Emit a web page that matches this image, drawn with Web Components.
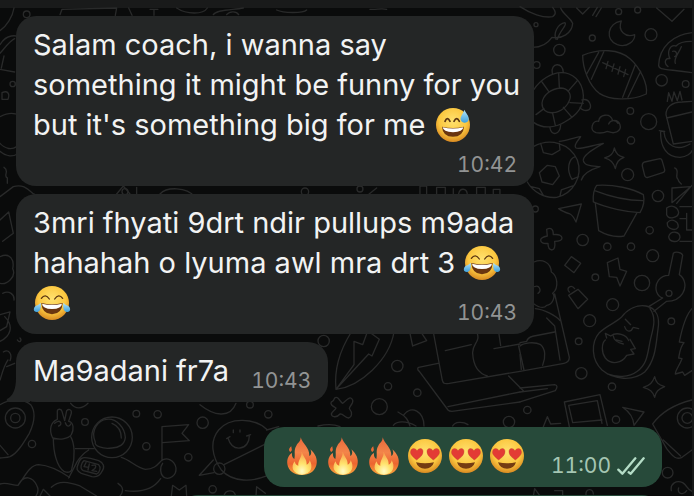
<!DOCTYPE html>
<html lang="en">
<head>
<meta charset="utf-8">
<meta name="viewport" content="width=device-width, initial-scale=1">
<title>Chat</title>
<style>
	body {
		margin: 0;
		background: #0a0b0b;
		font-family: Inter, "Liberation Sans", sans-serif;
		overflow: hidden;
	}
</style>
</head>
<body>

<chat-screen>
	<chat-bubble time="10:42" layout="below">Salam coach, i wanna say something it might be funny for you but it's something big for me <chat-emoji name="sweat"></chat-emoji></chat-bubble>
	<chat-bubble time="10:43" layout="over">3mri fhyati 9drt ndir pullups m9ada hahahah o lyuma awl mra drt 3 <chat-emoji name="joy"></chat-emoji> <chat-emoji name="joy"></chat-emoji></chat-bubble>
	<chat-bubble time="10:43" tail>Ma9adani fr7a</chat-bubble>
	<chat-bubble time="11:00" out><chat-emoji name="fire"></chat-emoji><chat-emoji name="fire"></chat-emoji><chat-emoji name="fire"></chat-emoji><chat-emoji name="love"></chat-emoji><chat-emoji name="love"></chat-emoji><chat-emoji name="love"></chat-emoji></chat-bubble>
	<chat-bubble out wide></chat-bubble>
</chat-screen>

<template id="screen-template">
<style>
	:host {
		display: flex;
		flex-direction: column;
		position: relative;
		height: 100vh;
		overflow: hidden;
		box-sizing: border-box;
		border-right: 2px solid #171818;
	}
	header {
		flex: none;
		height: 8px;
		background: #191a1a;
	}
	main {
		flex: 1;
		display: flex;
		flex-direction: column;
		gap: 8px;
		padding: 8px 30px 0 16px;
		position: relative;
	}
</style>
<chat-wallpaper></chat-wallpaper>
<header></header>
<main><slot></slot></main>
</template>

<template id="bubble-template">
<style>
	:host {
		display: flex;
		flex: none;
		align-self: flex-start;
		align-items: flex-end;
		column-gap: 22px;
		position: relative;
		box-sizing: border-box;
		max-width: 518px;
		padding: 9px 17px;
		border-radius: 20px;
		background: #242626;
		color: #f2f3f3;
	}
	:host([layout]) {
		display: grid;
		row-gap: 6px;
	}
	:host([layout]) .text {
		margin-right: -10px;
	}
	:host([layout="over"]) .text,
	:host([layout="over"]) .meta {
		grid-area: 1 / 1;
	}
	:host([out]) {
		align-self: flex-end;
		margin-top: 17px;
		background: #274a3a;
	}
	:host([out]) .text {
		padding-left: 2px;
	}
	:host([wide]) {
		width: 75%;
		height: 60px;
		max-width: none;
		margin-top: 0;
	}
	.text {
		padding-bottom: 2px;
		font-size: 29px;
		line-height: 40px;
	}
	.meta {
		display: flex;
		align-items: center;
		gap: 6px;
		justify-self: end;
		align-self: end;
		font-size: 21px;
		font-variant-numeric: tabular-nums;
		line-height: 24px;
		color: #929494;
	}
	:host([out]) .meta {
		color: #a5c6b3;
	}
	.tail {
		position: absolute;
		left: -10px;
		bottom: 0;
		fill: #242626;
	}
	[hidden] {
		display: none;
	}
</style>
<svg class="tail" width="24" height="24" viewBox="0 0 24 24" aria-hidden="true" hidden><path d="M10 0C10 11 7 18 1 21C0 23 1 24 3 24H24V0Z"/></svg>
<div class="text"><slot></slot></div>
<div class="meta">
	<time></time>
	<svg class="ticks" width="28" height="18" viewBox="0 0 84 54" fill="none" stroke="#b4dcc6" stroke-width="7" stroke-linecap="round" stroke-linejoin="round" aria-label="Delivered" hidden><path d="M4 38L16 50L55 4M35 46L41 50L80 4"/></svg>
</div>
</template>

<template id="wallpaper-template">
<style>
	:host {
		position: absolute;
		inset: 0;
	}
	svg {
		display: block;
		width: 100%;
		height: 100%;
	}
</style>
<svg viewBox="0 0 694 496" preserveAspectRatio="xMinYMin slice" fill="none" stroke="#292a2a" stroke-width="4" stroke-linecap="round" stroke-linejoin="round" aria-hidden="true">
	<!-- top right -->
	<g transform="translate(520 0) scale(.3333)">
		<path d="M0 20C30 40 70 55 98 50C112 42 104 30 98 22M122 24C130 45 150 50 158 70C156 100 125 118 96 112C80 135 60 142 38 142M108 118C100 100 112 72 135 68C143 75 120 90 112 118M170 24L188 42L208 22M218 46L232 22M228 50L244 24"/>
		<circle cx="118" cy="150" r="17"/><circle cx="48" cy="74" r="6"/><circle cx="50" cy="195" r="10"/><circle cx="217" cy="114" r="9"/><circle cx="296" cy="35" r="9"/><circle cx="353" cy="30" r="9"/><circle cx="393" cy="104" r="18"/><circle cx="425" cy="241" r="17"/><circle cx="497" cy="252" r="10"/><circle cx="331" cy="333" r="10"/><circle cx="386" cy="365" r="24"/><circle cx="333" cy="421" r="11"/><circle cx="323" cy="524" r="18"/><circle cx="414" cy="588" r="17"/><circle cx="389" cy="691" r="11"/><circle cx="188" cy="720" r="17"/><circle cx="46" cy="627" r="9"/>
		<path d="M304 63C262 70 254 120 292 134C322 144 346 122 344 104C316 114 292 92 304 63Z"/>
		<path d="M410 24L456 64L492 28"/>
		<path d="M188 166C240 144 298 148 330 176C362 204 384 254 379 282C330 304 268 300 238 280C206 256 188 204 188 166ZM236 157L200 222M252 154L214 238M346 194L308 292M362 214L324 292M248 188L324 224M264 184L258 206M282 192L276 214M300 200L294 222M317 208L311 230"/>
		<path d="M516 98C460 104 418 140 416 196C416 210 430 206 516 218M444 200C430 190 436 172 450 176C440 156 450 132 468 138C480 124 500 124 514 124M458 154C470 150 474 166 464 170M466 190C460 176 476 160 484 140"/>
		<path d="M42 268C60 240 94 218 124 218C154 218 188 240 190 286C192 330 160 352 134 366C112 380 72 390 42 368M66 310C68 284 94 266 122 264C142 264 154 280 150 296C144 318 124 336 98 338C78 340 66 328 66 310ZM97 220C90 188 130 184 130 218M186 300C208 292 218 320 206 330C196 334 184 330 180 322M90 384C94 410 120 404 122 376M66 246L86 274M116 220L118 262M172 242L144 274M190 310L150 308M156 352L130 322M106 376L98 340M48 344L72 326"/>
		<path d="M228 398C206 390 218 360 236 364C238 344 270 336 278 362C300 358 310 386 290 396C276 402 270 396 262 394C250 400 240 400 228 398ZM266 372C272 358 288 360 294 370"/>
		<path d="M283 444C288 462 296 468 312 472C296 478 290 486 286 506C280 486 272 480 254 474C272 468 280 462 283 444Z"/>
		<path d="M374 486L420 476C424 476 426 480 427 484L434 508C435 514 432 517 428 518L384 532C378 534 375 530 374 526L367 498C366 490 368 488 374 486Z"/>
		<path d="M40 440C90 412 150 430 172 480C190 530 158 582 110 592C72 596 38 574 22 546M82 496L106 500L118 528L98 554L66 546L58 518ZM62 430L70 458L96 464L120 450L118 430M166 470C146 476 138 510 156 538L176 530M120 588L124 570L158 558M70 586L58 566L34 560M118 424C140 424 160 412 182 410C176 420 158 436 168 444C180 450 216 436 250 430C220 448 188 466 190 482C194 500 222 498 240 500C214 508 190 520 184 540"/>
		<path d="M442 304L446 278L456 304L462 276L472 302L480 274L486 300M438 344C438 322 456 306 486 306L516 304M438 344L460 432L516 424M440 354L516 336M422 394C420 440 440 472 480 472C500 470 514 460 516 452M432 396C436 436 470 456 510 432M418 392L434 394"/>
		<path d="M464 504C482 512 462 530 474 538C476 546 480 548 484 552"/>
		<path d="M230 556C280 552 340 566 370 584C374 600 372 618 360 638C320 636 260 624 220 606C218 588 222 566 230 556ZM224 572C270 590 320 602 368 602M226 610L236 692C260 706 290 712 312 708L350 640"/>
		<path d="M116 626L184 612L168 666C162 652 154 644 150 642C138 638 124 632 116 626Z"/>
		<path d="M80 688C92 682 100 686 100 704C116 702 126 706 126 714C126 722 114 724 104 724C106 738 104 748 96 750C86 750 84 742 84 730C70 732 62 728 62 720C62 712 72 710 82 708Z"/>
		<path d="M456 564L512 560L456 608ZM516 556L470 610M440 624C456 612 474 622 476 638C474 654 446 660 440 644ZM442 668C456 652 478 666 474 682C466 694 440 688 442 668ZM446 710C452 690 480 694 480 712C476 730 448 728 446 710ZM480 620H516M480 656H500V690H516M480 724H516M500 640V656"/>
	</g>
	<!-- right, lower half -->
	<g transform="translate(520 240) scale(.3333)">
		<circle cx="262" cy="20" r="11"/><circle cx="333" cy="20" r="11"/><circle cx="398" cy="47" r="18"/><circle cx="226" cy="112" r="10"/><circle cx="366" cy="129" r="23"/><circle cx="278" cy="194" r="18"/><circle cx="209" cy="242" r="18"/><circle cx="454" cy="244" r="10"/><circle cx="176" cy="304" r="10"/><circle cx="184" cy="400" r="17"/><circle cx="276" cy="440" r="11"/><circle cx="288" cy="539" r="11"/><circle cx="22" cy="510" r="11"/><circle cx="443" cy="698" r="16"/>
		<path d="M154 50L182 70L162 98L134 76ZM262 68L294 54L300 88L320 94L300 138L290 112L268 110ZM146 166L174 148L203 178L174 206ZM148 156C136 144 154 132 164 146"/>
		<path d="M460 40C466 34 486 36 488 46L478 104C496 116 500 142 488 160C476 180 458 184 440 184L402 214M460 40L446 106C420 106 402 130 410 156C414 166 420 172 428 174L386 200"/>
		<circle cx="447" cy="160" r="9"/>
		<path d="M304 232C324 206 352 194 378 198C410 204 420 232 414 268C408 310 408 360 374 396C340 424 282 420 246 390C214 360 212 308 238 278C262 256 284 250 304 232ZM390 206C410 234 400 264 392 296C382 340 384 370 352 394C326 414 288 412 262 402"/>
		<path d="M260 294L256 280L272 288C290 274 320 284 326 302M330 298L346 326L332 328L342 342L320 346C306 370 274 376 256 354C244 338 244 310 256 300M280 288C282 304 300 310 310 312M288 300L306 304M316 238L332 254M314 260C320 278 334 276 338 264M340 262L356 266"/>
		<path d="M404 410C408 428 414 434 434 440C414 448 408 454 404 472C398 454 390 448 370 442C390 436 398 428 404 410Z"/>
		<path d="M516 206C496 226 484 276 478 306L492 308C480 320 478 344 476 354L486 356C478 378 466 390 466 402L488 396L494 406L516 392"/>
		<path d="M42 66C66 56 92 66 94 96C112 106 118 144 98 160C108 170 96 196 80 196C72 206 56 202 42 192M44 140C58 134 66 152 54 160M46 206C72 208 110 228 120 242M104 162L148 352C148 364 142 368 132 370L0 394M80 234L104 258L120 360M0 308L20 304C24 290 34 290 42 288L104 276M0 318C10 308 44 304 62 314C76 326 78 350 68 376M0 344L4 388"/>
		<path d="M0 444L104 434C114 436 112 442 106 452L0 486M0 456L82 446"/>
		<path d="M133 486L240 464L262 556M133 486L148 560M146 496L232 482L246 550M146 496L158 548L246 540M70 560L82 530L92 552L122 550"/>
		<path d="M308 502L372 516L342 556C340 530 326 514 308 502ZM516 480C460 494 424 516 398 552L440 626C460 652 470 660 486 652L516 630M430 600L482 648"/>
		<circle cx="502" cy="534" r="30"/><circle cx="502" cy="534" r="16"/>
		<path d="M454 752C450 730 470 720 488 728C502 736 502 750 516 754M476 744C470 760 490 768 500 752M40 768L44 746L60 768M104 752H128V768M198 764C196 744 220 744 220 762"/>
	</g>
	<!-- middle -->
	<g transform="translate(310 310) scale(.3333)">
		<circle cx="41" cy="93" r="17"/><circle cx="262" cy="168" r="17"/><circle cx="234" cy="229" r="11"/><circle cx="322" cy="248" r="11"/><circle cx="208" cy="290" r="24"/><circle cx="597" cy="336" r="17"/>
		<path d="M124 66C90 120 72 180 78 238C150 230 238 150 252 66M78 238L176 132L186 138L208 88L178 66M78 238L132 164V94L158 104L172 66M300 70L308 108L350 92L334 68"/>
		<path d="M74 264C84 256 90 276 98 280C112 268 122 256 128 270C132 280 118 288 118 296C130 310 124 322 116 324C104 324 100 310 90 312C82 322 66 324 64 312C66 304 76 300 78 294C66 288 60 282 64 276C66 274 70 276 74 264Z"/>
		<path d="M370 66L396 206C398 222 404 222 418 220L630 184M384 160L326 172C322 174 322 180 328 184L414 300C418 304 420 304 426 304L630 276M414 290L630 246M406 122L484 104M500 66C514 96 486 100 488 130C490 166 504 190 532 198M566 66L572 106M552 116L630 102M626 108L642 180M596 198L640 242"/>
		<path d="M264 306C290 320 294 330 300 348M282 314C304 284 342 304 342 348M428 348C434 334 460 334 474 344M250 346C260 334 286 330 318 348M24 348C50 342 72 342 90 350"/>
	</g>
	<!-- bottom left -->
	<g transform="translate(0 370) scale(.3333)">
		<circle cx="46" cy="144" r="30"/><circle cx="46" cy="144" r="14"/><circle cx="96" cy="222" r="11"/><circle cx="255" cy="156" r="10"/><circle cx="409" cy="131" r="10"/><circle cx="473" cy="133" r="11"/><circle cx="439" cy="229" r="11"/><circle cx="565" cy="262" r="11"/><circle cx="608" cy="158" r="17"/><circle cx="750" cy="104" r="10"/><circle cx="805" cy="133" r="11"/><circle cx="638" cy="358" r="11"/>
		<path d="M0 104C30 86 70 86 92 104C108 126 102 160 88 190C70 220 52 250 30 260C20 264 10 262 0 264M0 226L24 254M212 100C226 118 246 118 264 100"/>
		<path d="M158 204C146 180 152 156 172 148L172 122C174 116 184 116 186 124L194 152L200 122C206 116 216 118 214 130L206 154C222 156 222 180 214 194C204 208 178 210 158 204ZM164 160C180 144 190 164 176 168M196 158C202 174 210 168 212 162M160 204C160 246 170 290 192 304C206 310 216 306 216 294C226 262 224 220 212 200"/>
		<circle cx="336" cy="202" r="61"/>
		<path d="M286 216C270 180 296 150 320 148C350 144 374 174 376 202C374 224 356 234 336 234C308 238 282 228 286 216ZM336 160C356 168 364 184 364 204M226 236H282M206 324L232 274C240 262 250 250 266 240M364 262C388 268 410 294 436 298C464 298 474 282 484 272M486 270V170L566 164L546 190L568 212L488 218M484 272C500 260 524 270 528 294C530 318 508 328 496 324C478 316 480 290 488 280"/>
		<path d="M248 264C254 262 264 262 296 272C310 278 316 290 306 304C300 318 290 322 276 320L244 310C230 302 228 296 234 284C238 272 240 266 248 264ZM252 272L296 284C304 292 300 306 290 312L250 302C238 296 244 278 252 272ZM258 278L252 290L266 292M268 282L264 300M276 286C292 282 290 294 276 302L290 304"/>
		<path d="M0 342C20 336 36 346 54 346C74 320 90 284 116 284C146 286 176 300 208 322M54 346C72 312 98 320 110 346C118 360 112 372 108 378M120 378L130 358L150 378M154 352C176 330 206 336 240 348L290 378M354 340C370 350 372 364 360 378M376 362C420 368 460 358 482 326"/>
		<path d="M800 178C764 144 690 140 656 180C628 214 636 260 664 300C700 340 760 334 800 318M640 270L598 316L642 308M672 284L800 220M700 188V180M720 186V180M684 204C690 224 700 236 720 234C738 232 748 216 748 198M680 206L690 200M740 198L752 194M600 104C640 136 690 148 708 100M800 180L836 170"/>
		<circle cx="658" cy="296" r="17"/>
		<path d="M514 378L518 346L538 360L558 346L560 378M672 378C676 358 700 358 706 374M768 378L770 350L796 370"/>
	</g>
	<!-- left edge and the strips between the bubbles -->
	<g transform="scale(.3333)">
		<circle cx="80" cy="43" r="10"/><circle cx="38" cy="252" r="8"/>
		<path d="M0 92C20 78 38 50 42 24M0 134C20 100 50 106 60 112M0 160C16 142 30 122 44 116M4 204L12 168M0 208L44 216M6 278C24 270 30 282 24 298H6ZM0 350C20 340 36 338 46 342M0 430C16 448 36 450 50 440M0 454C20 472 40 470 52 462M12 502C30 512 8 528 22 534V550M0 590L40 560C66 552 80 564 98 580L114 588M180 44L186 28L350 24L346 46M386 24L396 46M450 28H474M462 28V46M530 24C560 44 610 44 622 24M680 44C690 32 710 34 716 44M350 582L370 558L390 582M410 582V562M480 582C500 560 560 560 584 590M640 44C650 28 700 30 730 24M830 30C850 40 910 40 920 30M1110 28C1130 30 1140 24 1160 28"/>
		<path d="M0 660L26 636L40 700L8 724M0 770C30 756 44 780 38 806C50 830 20 856 0 850M8 880C28 870 44 884 42 900M0 944L30 936L20 980L0 992M14 950C44 980 30 1010 0 1024M10 1056C26 1046 38 1062 30 1082M24 1080C10 1100 4 1130 0 1140M52 1020C60 1032 66 1020 60 1014M20 1100L44 1090"/>
		<circle cx="375" cy="575" r="9"/><circle cx="915" cy="575" r="11"/><circle cx="1080" cy="567" r="9"/>
		<path d="M1100 588L1130 564M1260 582V558H1280V582M1310 582V562H1336V582M1360 582V566M1376 582C1380 562 1400 564 1402 582M1430 582V562H1456V582M1480 582V568H1500V582"/>
	</g>
</svg>
</template>

<script>
	const emojis = {
		sweat: {
			label: "😅",
			art: `
				<circle cx="54" cy="54" r="51" fill="url(#face)"/>
				<path d="M30 43Q37 27 45 43M57 43Q65 27 73 43" fill="none" stroke="#5a3411" stroke-width="5" stroke-linecap="round"/>
				<path d="M21 59Q54 67 87 59Q85 89 54 89Q23 89 21 59Z" fill="#6a3510"/>
				<path d="M23 61Q54 68 85 61Q84 75 54 76Q24 75 23 61Z" fill="#fff"/>
				<path d="M88 8C94 20 103 27 101 38C98 50 80 50 77 38C75 28 85 20 88 8Z" fill="url(#water)"/>`
		},
		joy: {
			label: "😂",
			art: `
				<circle cx="54" cy="54" r="51" fill="url(#face)"/>
				<path d="M22 40Q34 24 46 42M62 42Q74 24 86 40" fill="none" stroke="#5a3411" stroke-width="4" stroke-linecap="round"/>
				<path d="M22 54Q54 62 86 54Q84 87 54 88Q24 87 22 54Z" fill="#6a3510"/>
				<path d="M24 56Q54 63 84 56Q83 71 54 72Q25 71 24 56Z" fill="#fff"/>
				<path d="M20 53C22 65 20 79 9 81C-2 82 -3 70 4 64C9 60 15 60 20 53Z" fill="url(#water)"/>
				<path d="M88 53C86 65 88 79 99 81C110 82 111 70 104 64C99 60 93 60 88 53Z" fill="url(#water)"/>`
		},
		love: {
			label: "😍",
			art: `
				<circle cx="54" cy="54" r="51" fill="url(#face)"/>
				<path d="M29 66C18 57 8 49 11 39C14 29 25 30 30 38C37 28 49 30 48 42C47 54 37 59 29 66Z" fill="#e33b35" stroke="#b9402a" stroke-width="1"/>
				<path d="M79 66C71 59 61 54 60 42C59 30 71 28 78 38C83 30 94 29 97 39C100 49 90 57 79 66Z" fill="#e33b35" stroke="#b9402a" stroke-width="1"/>
				<path d="M27 73Q54 79 81 73Q75 92 54 92Q33 92 27 73Z" fill="#743c12"/>`
		},
		fire: {
			label: "🔥",
			art: `
				<path d="M50 -2C55 17 77 29 76 54C83 51 83 41 79 34C94 47 102 64 97 82C91 102 76 111 54 111C30 111 13 98 10 78C8 63 14 51 24 45C23 53 25 60 31 63C35 45 28 39 37 23C42 14 50 11 50 -2Z" fill="url(#flame)"/>
				<path d="M22 25C13 32 14 38 19 42C27 37 22 32 22 25Z" fill="#e76a36"/>
				<path d="M53 41C58 57 69 63 68 80C73 78 76 74 77 67C88 84 83 109 54 110C26 109 19 86 32 70C34 79 38 83 43 83C41 68 54 58 53 41Z" fill="url(#core)"/>`
		}
	};

	class ChatEmoji extends HTMLElement {
		constructor() {
			super();
			this.attachShadow({ mode: "open" });
		}

		connectedCallback() {
			const emoji = emojis[this.getAttribute("name")];
			this.setAttribute("role", "img");
			this.setAttribute("aria-label", emoji.label);
			this.shadowRoot.innerHTML = `
<style>
	:host {
		display: inline-flex;
		align-items: center;
		box-sizing: border-box;
		width: 41px;
		height: 40px;
		padding-left: 1px;
		vertical-align: top;
	}
	svg {
		width: 36px;
		height: 36px;
		overflow: visible;
	}
</style>
<svg viewBox="0 0 108 108" aria-hidden="true">
	<defs>
		<radialGradient id="face" cx=".5" cy=".38" r=".62">
			<stop offset="0" stop-color="#ffe270"/>
			<stop offset=".65" stop-color="#fbc73f"/>
			<stop offset="1" stop-color="#d98a22"/>
		</radialGradient>
		<linearGradient id="water" x2="0" y2="1">
			<stop offset="0" stop-color="#b5e5f8"/>
			<stop offset="1" stop-color="#3da0dc"/>
		</linearGradient>
		<linearGradient id="flame" x2="0" y2="1">
			<stop offset="0" stop-color="#e9683a"/>
			<stop offset=".4" stop-color="#f3854a"/>
			<stop offset=".7" stop-color="#ec6530"/>
			<stop offset="1" stop-color="#f8a63c"/>
		</linearGradient>
		<radialGradient id="core" cx=".5" cy=".85" r=".75">
			<stop offset="0" stop-color="#fffbc8"/>
			<stop offset=".45" stop-color="#ffe36d"/>
			<stop offset="1" stop-color="#f9a750"/>
		</radialGradient>
	</defs>
	${emoji.art}
</svg>`;
		}
	}

	class ChatWallpaper extends HTMLElement {
		constructor() {
			super();
			this.attachShadow({ mode: "open" });
			const template = document.getElementById("wallpaper-template");
			this.shadowRoot.appendChild(template.content.cloneNode(true));
		}
	}

	class ChatBubble extends HTMLElement {
		constructor() {
			super();
			this.attachShadow({ mode: "open" });
			const template = document.getElementById("bubble-template");
			this.shadowRoot.appendChild(template.content.cloneNode(true));
		}

		connectedCallback() {
			const root = this.shadowRoot;
			const time = this.getAttribute("time");
			root.querySelector("time").textContent = time || "";
			if (this.hasAttribute("tail")) {
				root.querySelector(".tail").removeAttribute("hidden");
			}
			if (this.hasAttribute("out") && time) {
				root.querySelector(".ticks").removeAttribute("hidden");
			}
		}
	}

	class ChatScreen extends HTMLElement {
		constructor() {
			super();
			this.attachShadow({ mode: "open" });
			const template = document.getElementById("screen-template");
			this.shadowRoot.appendChild(template.content.cloneNode(true));
		}
	}

	customElements.define("chat-emoji", ChatEmoji);
	customElements.define("chat-wallpaper", ChatWallpaper);
	customElements.define("chat-bubble", ChatBubble);
	customElements.define("chat-screen", ChatScreen);
</script>
</body>
</html>
